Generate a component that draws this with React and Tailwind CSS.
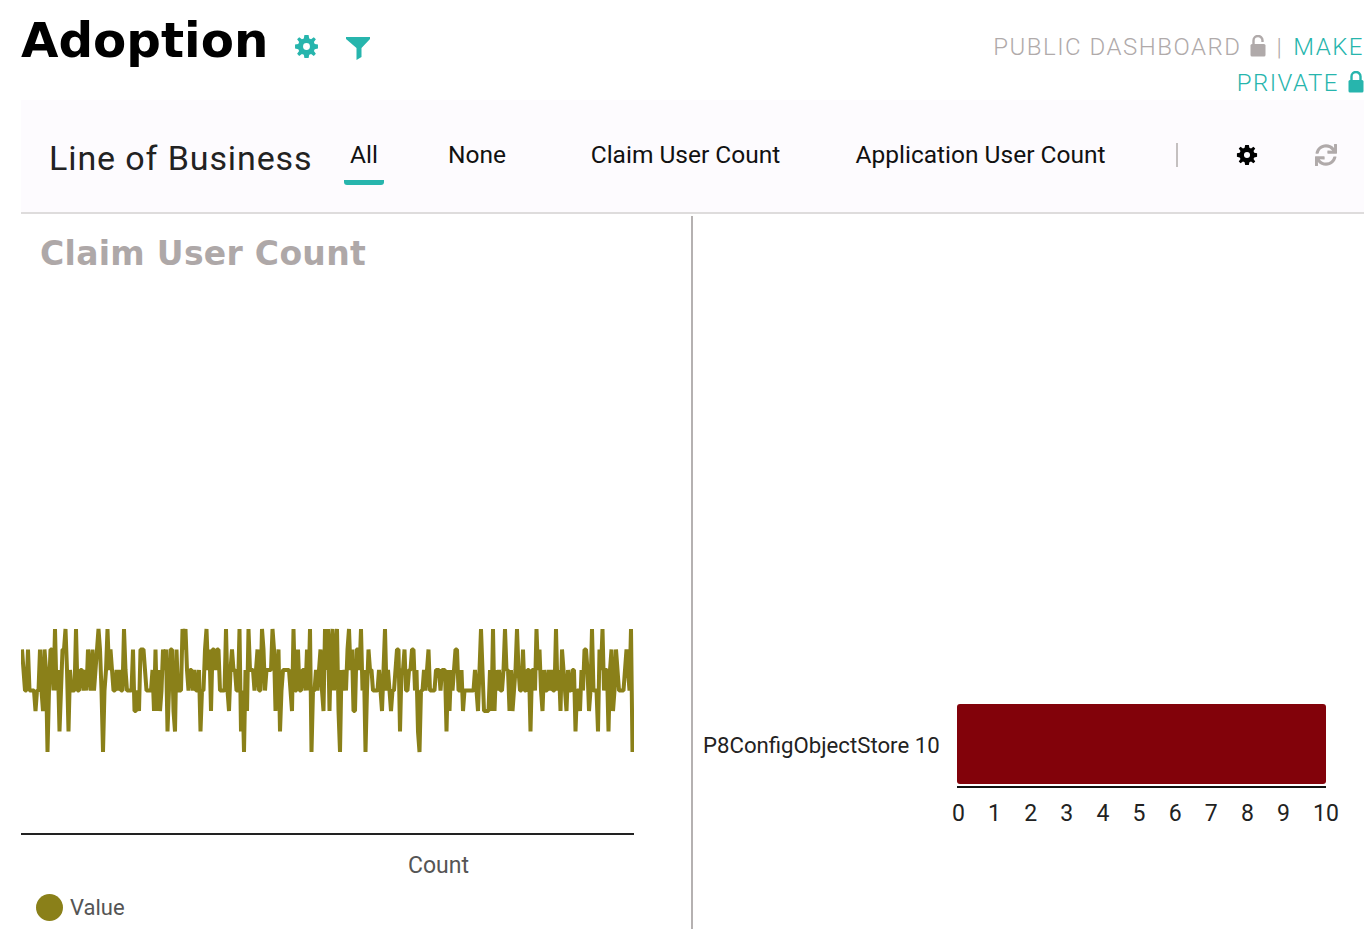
import { FaSync } from "react-icons/fa";

const TOP = 629;
const STEP_Y = 20.5;

// spike positions read off the chart: level index -> x coordinates
const spikes = {
  0: [55, 65, 76, 98, 108, 124, 168, 182, 185, 206, 226, 239, 249, 262, 272, 293, 310, 325, 328, 332, 337, 349, 361, 385, 481, 493, 505, 517, 537, 556, 592, 603, 631],
  5: [60, 68, 168, 175, 201, 241, 280, 400, 418, 446, 530, 575, 598, 608],
  6: [47, 103, 244, 312, 340, 366, 420, 632],
};

const buildLine = () => {
  let seed = 17;
  const rand = () => {
    seed = (seed * 16807) % 2147483647;
    return seed / 2147483647;
  };
  const points = [];
  for (let x = 22; x <= 633; x += 1.5) {
    const r = rand();
    let level = r < 0.14 ? 1 : r < 0.5 ? 2 : r < 0.86 ? 3 : 4;
    for (const [lvl, xs] of Object.entries(spikes)) {
      if (xs.some((s) => Math.abs(s - x) <= 0.8)) level = Number(lvl);
    }
    points.push(`${(x - 21).toFixed(1)},${(TOP + level * STEP_Y - 625).toFixed(1)}`);
  }
  return points.join(" ");
};

const Gear = ({ className }) => (
  <svg className={className} viewBox="0 0 24 24" fill="currentColor">
    <path
      fillRule="evenodd"
      d="M10 1h4l.6 3.2 1.8.8L19 3.1 21 5l-1.9 2.7.8 1.8L23 10v4l-3.1.6-.8 1.8L21 19l-2 2-2.6-1.9-1.8.8L14 23h-4l-.6-3.1-1.8-.8L5 21l-2-2 1.9-2.6-.8-1.8L1 14v-4l3.1-.5.8-1.8L3 5l2-1.9L7.600 5l1.800-.8zM12 8.700a3.300 3.300 0 1 0 0 6.600 3.300 3.300 0 0 0 0-6.600z"
    />
  </svg>
);

const Funnel = ({ className }) => (
  <svg className={className} viewBox="0 0 24 24" fill="currentColor">
    <path d="M0 1h24v2l-8.500 9v9l-5 3V12L0 3z" />
  </svg>
);

const LockIcon = ({ open, className }) => (
  <svg className={className} viewBox="0 0 16 22" fill="currentColor">
    <path
      d={open ? "M3.500 10V5.500a4.500 4.500 0 0 1 9 0V7" : "M3.500 10V5.500a4.500 4.500 0 0 1 9 0V10"}
      fill="none"
      stroke="currentColor"
      strokeWidth="2.400"
    />
    <rect x="0.500" y="9" width="15" height="12.500" rx="1.500" />
  </svg>
);

const navItems = [
  { label: "All", width: "w-[40px]", gap: "ml-[32px]", active: true },
  { label: "None", width: "w-[56px]", gap: "ml-[65px]" },
  { label: "Claim User Count", width: "w-[191px]", gap: "ml-[85px]" },
  { label: "Application User Count", width: "w-[249px]", gap: "ml-[75px]" },
];

const ticks = ["0", "1", "2", "3", "4", "5", "6", "7", "8", "9", "10"];

const App = () => {
  return (
    <div className="w-[1366px] h-[929px] overflow-hidden bg-white pr-[2px] font-['Roboto',sans-serif]">
      <header className="flex h-[100px] justify-between pl-[21px]">
        <div className="flex items-start">
          <h1 className="mt-[12px] text-[48.400px] leading-[56px] font-bold text-black font-['DejaVu_Sans',sans-serif]">Adoption</h1>
          <Gear className="ml-[26px] mt-[34px] h-[25px] w-[25px] text-[#27b5ad]" />
          <Funnel className="ml-[27px] mt-[36px] h-[24px] w-[24px] text-[#27b5ad]" />
        </div>
        <div className="mt-[29px] w-[372px] text-[24px] leading-[36px] tracking-[1.5px] font-light">
          <div className="flex justify-end">
            <span className="text-[#b0aaaa]">PUBLIC DASHBOARD</span>
            <LockIcon open className="ml-[9px] mt-[6px] h-[22px] w-[16px] text-[#b0aaaa]" />
            <span className="mx-[10px] text-[#b0aaaa]">|</span>
            <span className="text-[#27b5ad]">MAKE</span>
          </div>
          <div className="flex justify-end">
            <span className="text-[#27b5ad]">PRIVATE</span>
            <LockIcon className="ml-[9px] mt-[6px] h-[22px] w-[16px] text-[#27b5ad]" />
          </div>
        </div>
      </header>

      <nav className="ml-[21px] flex h-[114px] items-start border-b-2 border-[#dedcdc] bg-[#fdfbfe] pl-[28px]">
        <span className="mt-[38px] w-[263px] text-[34px] leading-[40px] tracking-[0.9px] whitespace-nowrap text-[#222]">Line of Business</span>
        {navItems.map((item) => (
          <div key={item.label} className={`${item.gap} ${item.width} mt-[38px] flex flex-col items-center`}>
            <span className="text-[24.500px] leading-[34px] whitespace-nowrap text-[#111]">{item.label}</span>
            {item.active && <span className="mt-[8px] h-[5px] w-[40px] rounded-b-[3px] bg-[#27b5ad]" />}
          </div>
        ))}
        <span className="ml-[71px] mt-[43px] h-[24px] w-[2px] bg-[#c4c0c0]" />
        <Gear className="ml-[58px] mt-[44px] h-[22px] w-[22px] text-black" />
        <FaSync className="ml-[57px] mt-[44px] text-[22px] text-[#b0aaaa]" />
      </nav>

      <main className="ml-[21px] mt-[2px] flex h-[713px]">
        <section className="flex w-[672px] flex-col border-r-2 border-[#b5b1b1]">
          <h2 className="mt-[16px] ml-[19px] text-[33px] leading-[44px] tracking-[0.3px] font-bold text-[#aea8a8] font-['DejaVu_Sans',sans-serif]">Claim User Count</h2>
          <svg className="mt-[349px] block" width="613" height="135" viewBox="0 0 613 135" fill="none">
            <polyline points={buildLine()} stroke="#8a8019" strokeWidth="4" strokeLinejoin="bevel" />
          </svg>
          <div className="mt-[73px] h-[2px] w-[613px] bg-[#222]" />
          <div className="mt-[16px] w-[835px] text-center text-[23px] leading-[30px] text-[#555]">Count</div>
          <div className="mt-[10px] ml-[15px] flex items-center gap-[7px]">
            <span className="h-[27px] w-[27px] rounded-full bg-[#8a8019]" />
            <span className="mt-[2px] text-[22px] leading-[30px] text-[#555]">Value</span>
          </div>
        </section>

        <section className="flex flex-1 flex-col pl-[10px]">
          <div className="mt-[488px] flex h-[85px]">
            <span className="mt-[25px] w-[238px] text-[22.200px] leading-[32px] whitespace-nowrap text-[#222]">P8ConfigObjectStore 10</span>
            <div className="ml-[16px] flex w-[369px] flex-col">
              <div className="h-[80px] rounded-[3px] bg-[#82020a]" />
              <div className="mt-[2px] h-[2px] bg-[#111]" />
            </div>
          </div>
          <div className="ml-[249px] mt-[10px] flex w-[387px] justify-between text-[23px] leading-[30px] text-[#222]">
            {ticks.map((t) => (
              <span key={t}>{t}</span>
            ))}
          </div>
        </section>
      </main>
    </div>
  );
};

export default App;
